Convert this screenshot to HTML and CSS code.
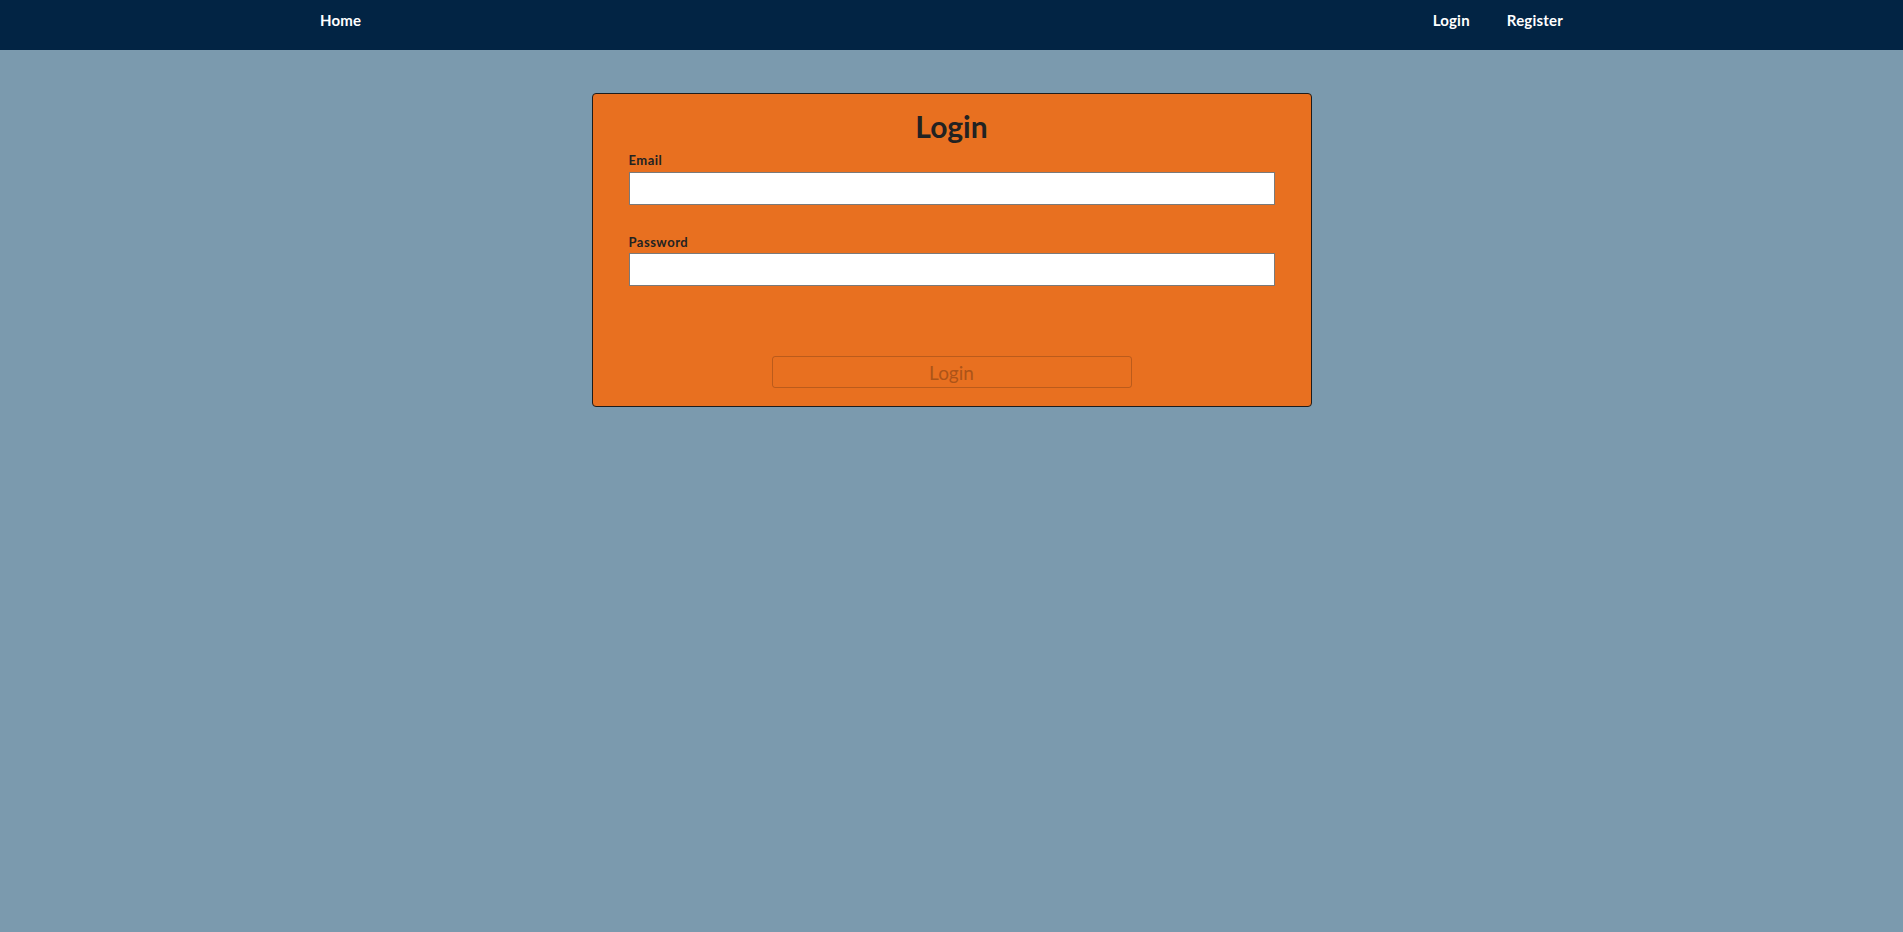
FILE: index.html
```html
<!DOCTYPE html>
<html lang="en">
<head>
<meta charset="utf-8">
<title>Login</title>
<link rel="stylesheet" href="styles.css">
</head>
<body>
<nav class="navbar">
  <a class="nav-link" href="#">Home</a>
  <div class="nav-right">
    <a class="nav-link" href="#">Login</a>
    <a class="nav-link" href="#">Register</a>
  </div>
</nav>
<main class="page">
  <form class="card">
    <h1 class="card-title">Login</h1>
    <label class="field-label" for="email">Email</label>
    <input class="field-input" id="email" type="email">
    <label class="field-label field-label-spaced" for="password">Password</label>
    <input class="field-input" id="password" type="password">
    <div class="actions">
      <button class="btn-login" type="button" disabled>Login</button>
    </div>
  </form>
</main>
</body>
</html>
```

FILE: styles.css
```css
html, body {
  margin: 0;
  padding: 0;
}
body {
  background: #7b9aae;
  font-family: Lato, "Noto Sans", sans-serif;
  min-height: 100vh;
}
.navbar {
  height: 50px;
  background: #022444;
  display: flex;
  justify-content: space-between;
  align-items: flex-start;
  padding: 11px 340px 0 320px;
  box-sizing: border-box;
}
.nav-right {
  display: flex;
  gap: 37px;
}
.nav-link {
  color: #ffffff;
  text-decoration: none;
  font-weight: 700;
  font-size: 15px;
  line-height: 18px;
  letter-spacing: 0.2px;
}
.page {
  padding-top: 43px;
}
.card {
  box-sizing: border-box;
  width: 720px;
  margin: 0 auto;
  background: #e87020;
  border: 1px solid #1c1c1c;
  border-radius: 4px;
  padding: 14px 36px 18px;
  display: flex;
  flex-direction: column;
}
.card-title {
  margin: 0 0 8px;
  text-align: center;
  font-size: 30px;
  line-height: 36px;
  font-weight: 700;
  color: #222222;
}
.field-label {
  display: block;
  font-size: 13px;
  line-height: 16px;
  font-weight: 700;
  letter-spacing: 0.5px;
  color: #222222;
  margin-bottom: 4px;
}
.field-label-spaced {
  margin-top: 29px;
  margin-bottom: 3px;
}
.field-input {
  box-sizing: border-box;
  height: 33px;
  width: 100%;
  margin: 0;
  border: 1px solid #7a7a7a;
  background: #ffffff;
  padding: 0 6px;
}
.actions {
  display: flex;
  justify-content: center;
  margin-top: 70px;
}
.btn-login {
  width: 360px;
  height: 32px;
  background: transparent;
  border: 1px solid rgba(120, 60, 20, 0.4);
  border-radius: 3px;
  color: #ad5418;
  font-family: Lato, "Noto Sans", sans-serif;
  font-size: 19px;
  font-weight: 400;
  padding: 0;
}
```
